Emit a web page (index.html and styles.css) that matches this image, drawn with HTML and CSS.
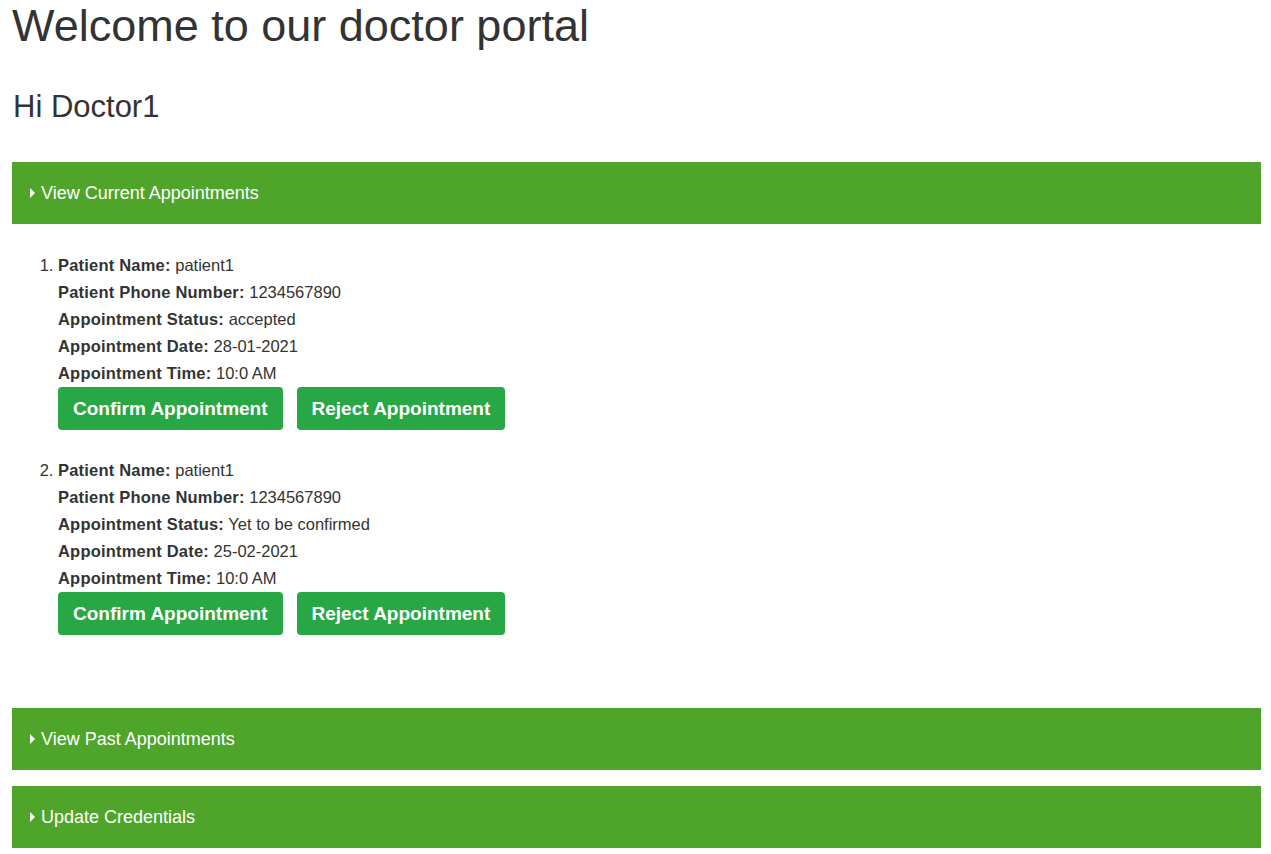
FILE: index.html
```html
<!DOCTYPE html>
<html lang="en">
<head>
<meta charset="utf-8">
<title>Doctor portal</title>
<link rel="stylesheet" href="styles.css">
</head>
<body>
<div class="page">
  <h1 class="title">Welcome to our doctor portal</h1>
  <h2 class="greeting">Hi Doctor1</h2>

  <section class="panel">
    <div class="bar"><span class="caret"></span>View Current Appointments</div>
    <ol class="appts">
      <li class="appt">
        <div class="line"><b>Patient Name:</b> patient1</div>
        <div class="line"><b>Patient Phone Number:</b> 1234567890</div>
        <div class="line"><b>Appointment Status:</b> accepted</div>
        <div class="line"><b>Appointment Date:</b> 28-01-2021</div>
        <div class="line"><b>Appointment Time:</b> 10:0 AM</div>
        <div class="actions">
          <button class="btn">Confirm Appointment</button>
          <button class="btn">Reject Appointment</button>
        </div>
      </li>
      <li class="appt">
        <div class="line"><b>Patient Name:</b> patient1</div>
        <div class="line"><b>Patient Phone Number:</b> 1234567890</div>
        <div class="line"><b>Appointment Status:</b> Yet to be confirmed</div>
        <div class="line"><b>Appointment Date:</b> 25-02-2021</div>
        <div class="line"><b>Appointment Time:</b> 10:0 AM</div>
        <div class="actions">
          <button class="btn">Confirm Appointment</button>
          <button class="btn">Reject Appointment</button>
        </div>
      </li>
    </ol>
  </section>

  <section class="panel">
    <div class="bar"><span class="caret"></span>View Past Appointments</div>
  </section>

  <section class="panel">
    <div class="bar"><span class="caret"></span>Update Credentials</div>
  </section>
</div>
</body>
</html>
```

FILE: styles.css
```css
html, body {
  margin: 0;
  padding: 0;
  background: #fff;
}

body {
  font-family: "Liberation Sans", Arial, Helvetica, sans-serif;
  color: #333;
  font-size: 16px;
}

.page {
  padding: 0 10px 0 12px;
}

.title {
  margin: 0;
  font-size: 45px;
  font-weight: normal;
  line-height: 52px;
}

.greeting {
  margin: 37px 0 37px 1px;
  font-size: 31px;
  font-weight: normal;
  line-height: 36px;
}

.panel {
  margin-bottom: 16px;
}

.bar {
  height: 62px;
  background: #4fa52a;
  color: #fff;
  font-size: 18px;
  display: flex;
  align-items: center;
  padding-left: 18px;
}

.caret {
  width: 0;
  height: 0;
  border-left: 5px solid #fff;
  border-top: 5px solid transparent;
  border-bottom: 5px solid transparent;
  margin-right: 6px;
}

.appts {
  margin: 28px 0 0;
  padding: 0 0 57px 46px;
  font-size: 16.5px;
}

.appt + .appt {
  margin-top: 27px;
}

.line {
  line-height: 27px;
}

.line b {
  font-weight: bold;
  letter-spacing: 0.2px;
}

.actions {
  display: flex;
  gap: 14px;
}

.btn {
  font-family: "Liberation Sans", Arial, Helvetica, sans-serif;
  font-size: 19px;
  font-weight: bold;
  color: #fff;
  background: #28a745;
  border: none;
  border-radius: 4px;
  padding: 0 15px;
  height: 43px;
  line-height: 43px;
}
```
